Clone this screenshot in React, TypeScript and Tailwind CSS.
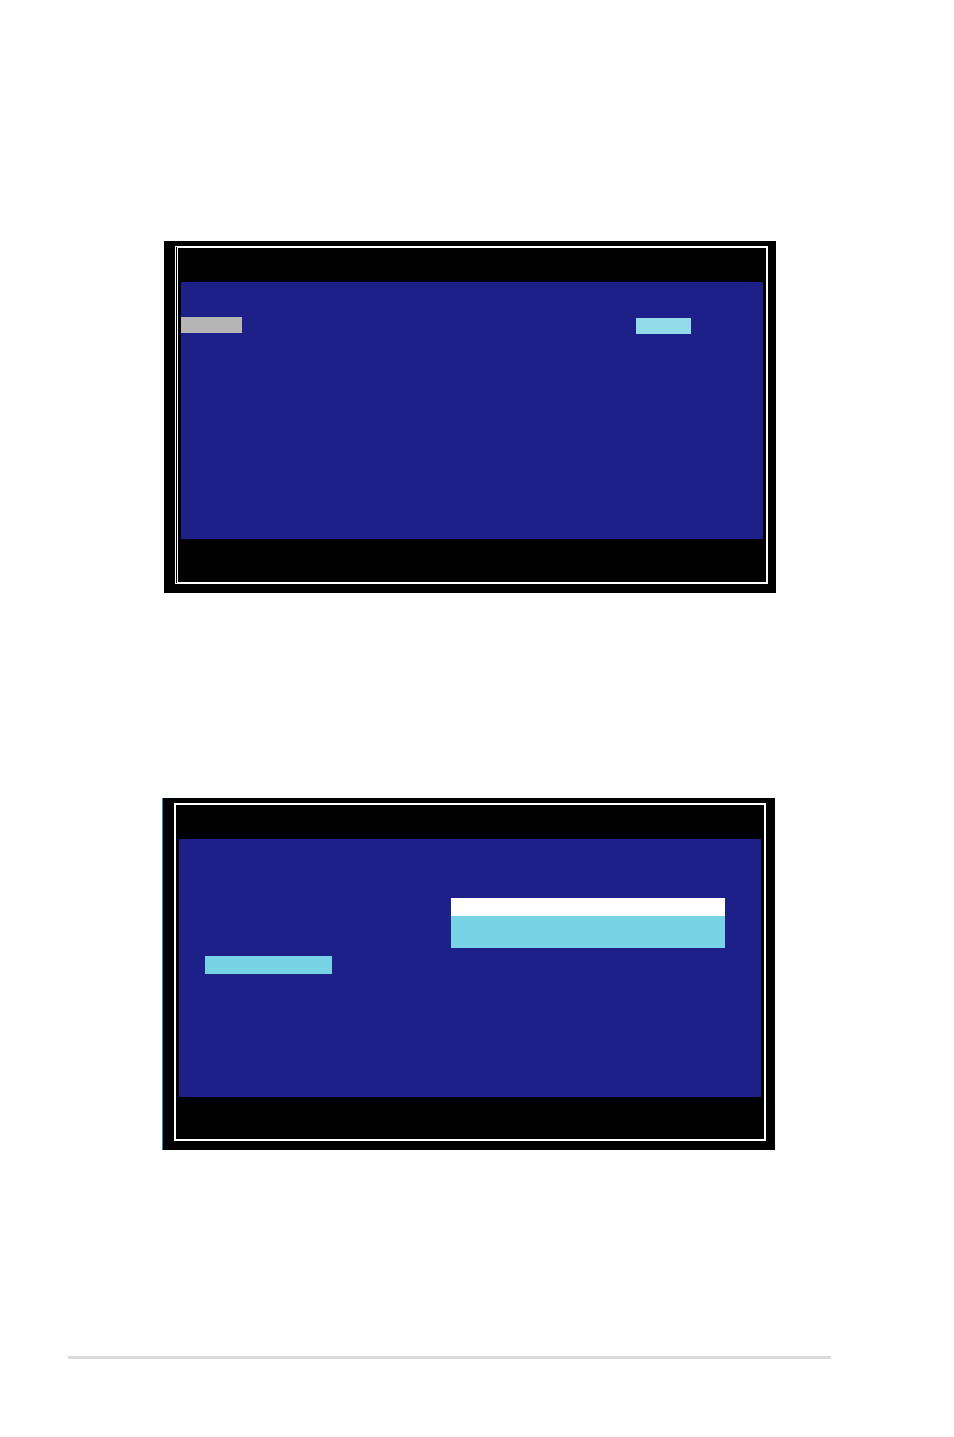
import type { ReactNode } from "react";

type ScreenProps = {
  label: string;
  outer: string;
  frame: string;
  body: string;
  footer: string;
  children: ReactNode;
};

function Screen({ label, outer, frame, body, footer, children }: ScreenProps) {
  return (
    <section aria-label={label} className={`bg-black pt-[5px] pb-[9px] ${outer}`}>
      <div className={`border-2 border-white px-[3px] ${frame}`}>
        <header className="h-[34px]" />
        <div className={`bg-[#1d2088] ${body}`}>{children}</div>
        <footer className={footer} />
      </div>
    </section>
  );
}

export default function App() {
  return (
    <main className="flex min-h-screen flex-col bg-white pt-[241px]">
      <Screen
        label="Main menu"
        outer="ml-[164px] mr-[178px] pl-[11px] pr-2"
        frame="border-l-[3px] [border-left-style:double]"
        body="h-[257px] pt-[35px]"
        footer="h-[43px]"
      >
        <div className="flex items-start justify-between pr-[72px]">
          <div className="h-4 w-[61px] bg-[#b5b5b6]" />
          <div className="mt-px h-4 w-[55px] bg-[#94dbea]" />
        </div>
      </Screen>

      <Screen
        label="Selection menu"
        outer="mt-[205px] ml-[162px] mr-[179px] border-l border-[#2484c6] pl-[11px] pr-[9px]"
        frame=""
        body="h-[258px] pt-[59px] pl-[26px] pr-9"
        footer="h-[42px]"
      >
        <div className="flex flex-col gap-2">
          <div className="w-[274px] self-end">
            <div className="h-[18px] bg-white" />
            <div className="h-8 bg-[#77d2e5]" />
          </div>
          <div className="h-[18px] w-[127px] bg-[#77d2e5]" />
        </div>
      </Screen>

      <hr className="mt-[206px] mr-[123px] mb-[78px] ml-[68px] h-[3px] border-0 bg-[#d9d9d9]" />
    </main>
  );
}
